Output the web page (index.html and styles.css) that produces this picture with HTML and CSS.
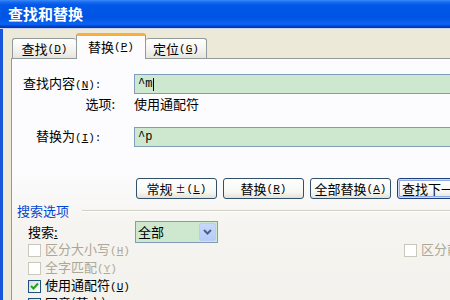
FILE: index.html
```html
<!DOCTYPE html>
<html lang="zh-CN">
<head>
<meta charset="utf-8">
<title>查找和替换</title>
<link rel="stylesheet" href="styles.css">
</head>
<body>
<div class="window">
  <div class="titlebar">查找和替换</div>
  <div class="client">
    <div class="tabs">
      <div class="tab tab-find">查找<span class="ak">(<u>D</u>)</span></div>
      <div class="tab tab-replace active">替换<span class="ak">(<u>P</u>)</span></div>
      <div class="tab tab-goto">定位<span class="ak">(<u>G</u>)</span></div>
    </div>
    <div class="panel">
      <div class="field field-find">
        <div class="label label-find">查找内容<span class="ak">(<u>N</u>):</span></div>
        <div class="input"><span class="mono">^m</span><span class="caret"></span></div>
      </div>
      <div class="field field-opt">
        <div class="label label-opt">选项:</div>
        <div class="value">使用通配符</div>
      </div>
      <div class="field field-repl">
        <div class="label label-repl">替换为<span class="ak">(<u>I</u>):</span></div>
        <div class="input"><span class="mono">^p</span></div>
      </div>
      <div class="buttons">
        <div class="btn">常规 <span class="more">±</span><span class="ak">(<u>L</u>)</span></div>
        <div class="btn">替换<span class="ak">(<u>R</u>)</span></div>
        <div class="btn">全部替换<span class="ak">(<u>A</u>)</span></div>
        <div class="btn default">查找下一处<span class="ak">(<u>F</u>)</span></div>
      </div>
      <div class="group">
        <div class="group-label">搜索选项</div>
        <div class="group-line"></div>
      </div>
      <div class="search-row">
        <div class="label label-search">搜索<u>:</u></div>
        <div class="select">
          <span class="select-text">全部</span>
          <span class="select-btn">
            <svg width="9" height="6" viewBox="0 0 9 6"><path d="M1 1 L4.5 4.5 L8 1" fill="none" stroke="#4d6185" stroke-width="2"/></svg>
          </span>
        </div>
      </div>
      <div class="checks">
        <div class="check-row">
          <div class="check disabled"><span class="box"></span><span class="ctext">区分大小写<span class="ak">(<u>H</u>)</span></span></div>
          <div class="check disabled"><span class="box"></span><span class="ctext">区分前缀<span class="ak">(<u>X</u>)</span></span></div>
        </div>
        <div class="check-row">
          <div class="check disabled"><span class="box"></span><span class="ctext">全字匹配<span class="ak">(<u>Y</u>)</span></span></div>
        </div>
        <div class="check-row">
          <div class="check"><span class="box checked"><svg width="9" height="9" viewBox="0 0 9 9"><path d="M1 4 L3.5 6.5 L8 1.5" fill="none" stroke="#21a121" stroke-width="2"/></svg></span><span class="ctext">使用通配符<span class="ak">(<u>U</u>)</span></span></div>
        </div>
        <div class="check-row">
          <div class="check"><span class="box"></span><span class="ctext">同音(英文)<span class="ak">(<u>K</u>)</span></span></div>
        </div>
      </div>
    </div>
  </div>
</div>
</body>
</html>
```

FILE: styles.css
```css
html, body {
  margin: 0;
  padding: 0;
}
body {
  width: 450px;
  height: 300px;
  overflow: hidden;
  font-family: "Noto Sans CJK SC", sans-serif;
  font-size: 13px;
  line-height: 16px;
  color: #000;
  background: #ece9d8;
}
u { text-decoration: underline; text-underline-offset: 1px; }
.ak {
  font-family: "Liberation Mono", "Noto Sans CJK SC", monospace;
  font-size: 11px;
}
.mono {
  font-family: "Liberation Mono", monospace;
  font-size: 12px;
}
.window {
  width: 450px;
  height: 300px;
  display: flex;
  flex-direction: column;
  overflow: hidden;
}
.titlebar {
  flex: none;
  height: 28px;
  box-sizing: border-box;
  padding-left: 8px;
  display: flex;
  align-items: center;
  color: #fff;
  font-weight: bold;
  font-size: 15px;
  background: linear-gradient(#3a8cf8 0, #1a6cf0 2px, #0058e8 5px, #0054e3 18px, #0a61f0 23px, #0660ee 25px, #003fc4 26px, #0038b8 28px);
  border-bottom: 1px solid #c9d3ea;
  height: 29px;
}
.client {
  flex: 1;
  border-left: 3px solid #1a56dc;
  background: #ece9d8;
  padding-left: 8px;
  display: flex;
  flex-direction: column;
  min-height: 0;
}
.tabs {
  flex: none;
  height: 29px;
  display: flex;
  align-items: flex-end;
  padding-left: 1px;
}
.tab {
  box-sizing: border-box;
  height: 20px;
  border: 1px solid #919b9c;
  border-bottom: none;
  border-radius: 3px 3px 0 0;
  background: linear-gradient(#ffffff, #f3f2ed 60%, #e6e4dc);
  display: flex;
  align-items: center;
  justify-content: center;
  white-space: nowrap;
}
.tab-find { width: 64px; border-right: none; }
.tab-replace { width: 70px; }
.tab-goto { width: 61px; border-left: none; }
.tab.active {
  height: 26px;
  margin-bottom: -1px;
  position: relative;
  z-index: 1;
  background: #fcfcfe;
  border-top: 3px solid #f7b03b;
  padding-bottom: 2px;
}
.panel {
  flex: 1;
  border-left: 1px solid #919b9c;
  border-top: 1px solid #919b9c;
  background: linear-gradient(#fcfcfe 0, #fcfcfe 45%, #f5f4f0 70%, #f3f2ed 100%);
  display: flex;
  flex-direction: column;
  overflow: hidden;
}
.field {
  display: flex;
  align-items: center;
  height: 20px;
}
.field-find { margin-top: 15px; }
.field-opt { margin-top: 2px; height: 16px; }
.field-repl { margin-top: 15px; }
.label {
  flex: none;
  width: 122px;
  box-sizing: border-box;
  white-space: nowrap;
}
.label-find { padding-left: 11px; }
.label-opt { text-align: right; padding-right: 19px; }
.label-repl { padding-left: 24px; }
.input {
  flex: none;
  width: 340px;
  height: 20px;
  box-sizing: border-box;
  border: 1px solid #7f9db9;
  background: #cde8cf;
  display: flex;
  align-items: center;
  padding-left: 3px;
}
.caret {
  width: 1px;
  height: 13px;
  background: #000;
  margin-left: 1px;
}
.value { white-space: nowrap; }
.buttons {
  margin-top: 31px;
  padding-left: 124px;
  display: flex;
  gap: 6px;
}
.btn {
  flex: none;
  width: 81px;
  height: 21px;
  box-sizing: border-box;
  border: 1px solid #30506e;
  border-radius: 3px;
  background: linear-gradient(#ffffff, #f6f6f2 70%, #e4e1d6);
  display: flex;
  align-items: center;
  justify-content: center;
  white-space: nowrap;
}
.btn.default {
  justify-content: flex-start;
  padding-left: 4px;
  box-shadow: inset 0 0 0 1px #cfdcfb, inset 0 0 0 2px #8fa9e6;
  border-color: #1c3f82;
}
.more { font-size: 10px; margin: 0 1px 0 3px; }
.group {
  margin-top: 4px;
  height: 16px;
  display: flex;
  align-items: center;
}
.group-label {
  padding-left: 5px;
  color: #0046d5;
  white-space: nowrap;
}
.group-line {
  flex: 1;
  margin-left: 13px;
  height: 1px;
  background: #d2d0c4;
  border-bottom: 1px solid #ffffff;
}
.search-row {
  margin-top: 2px;
  height: 22px;
  display: flex;
  align-items: center;
}
.label-search { width: 123px; padding-left: 16px; }
.select {
  flex: none;
  width: 83px;
  height: 22px;
  box-sizing: border-box;
  border: 1px solid #7f9db9;
  background: #cde8cf;
  display: flex;
  align-items: center;
  justify-content: space-between;
  padding: 1px;
}
.select-text { padding-left: 1px; }
.select-btn {
  width: 17px;
  height: 18px;
  box-sizing: border-box;
  border-radius: 2px;
  border: 1px solid #bccbf2;
  background: linear-gradient(#c8d8fc, #b6cbf8);
  display: flex;
  align-items: center;
  justify-content: center;
}
.checks {
  margin-top: -2px;
  display: flex;
  flex-direction: column;
}
.check-row {
  height: 18px;
  display: grid;
  grid-template-columns: 376px auto;
  padding-left: 16px;
  align-items: center;
}
.check {
  display: flex;
  align-items: center;
  white-space: nowrap;
}
.box {
  flex: none;
  width: 13px;
  height: 13px;
  box-sizing: border-box;
  border: 1px solid #1c5180;
  background: linear-gradient(135deg, #dcdcd7, #ffffff);
  display: flex;
  align-items: center;
  justify-content: center;
}
.check.disabled .box {
  border-color: #cac8bb;
  background: #ffffff;
}
.check.disabled .ctext { color: #aca899; }
.ctext { margin-left: 4px; }
```
